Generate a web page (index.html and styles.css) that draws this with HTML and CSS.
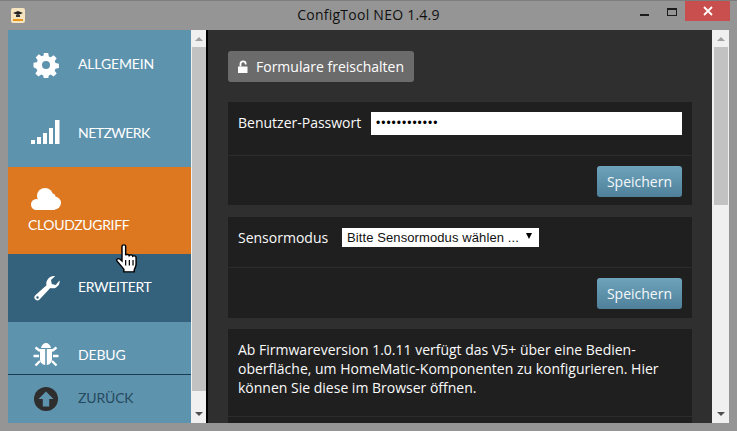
FILE: index.html
```html
<!DOCTYPE html>
<html lang="en">
<head>
    <meta charset="UTF-8">
    <title>ConfigTool NEO 1.4.9</title>
    <link rel="stylesheet" href="styles.css">
</head>
<body>
    <div class="window">
        <header class="titlebar">
            <svg class="app-icon" width="14" height="15" viewBox="0 0 14 15">
                <rect x="0" y="0" width="14" height="15" rx="2" fill="#f6e3c0"/>
                <path d="M2 5 7 3l5 2-5 2z" fill="#222"/>
                <path d="M5 7h4v2H5z" fill="#333"/>
                <rect x="2" y="11" width="10" height="2" fill="#e8961e"/>
            </svg>
            <span class="title">ConfigTool NEO 1.4.9</span>
            <div class="controls">
                <span class="ctl-min"></span>
                <span class="ctl-max"></span>
                <span class="ctl-close">
                    <svg width="10" height="10" viewBox="0 0 10 10"><path d="M1 1 9 9M9 1 1 9" stroke="#fff" stroke-width="1.8"/></svg>
                </span>
            </div>
        </header>
        <div class="client">
            <nav class="sidebar">
                <a class="item item-general">
                    <svg class="icon" width="26" height="26" viewBox="0 0 26 26">
                        <path fill="#fff" fill-rule="evenodd" d="M10.800 1h4.400l.6 3.400 2 .8 2.800-2 3.100 3.100-2 2.800.8 2 3.400.6v4.400l-3.400.6-.8 2 2 2.800-3.100 3.100-2.800-2-2 .8-.6 3.400h-4.400l-.6-3.400-2-.8-2.800 2-3.100-3.100 2-2.800-.8-2L.5 15.200v-4.400l3.400-.6.8-2-2-2.800 3.100-3.100 2.800 2 2-.8zM13 9a4 4 0 1 0 0 8 4 4 0 0 0 0-8z"/>
                    </svg>
                    <span>ALLGEMEIN</span>
                </a>
                <a class="item item-network">
                    <svg class="icon" width="30" height="26" viewBox="0 0 30 26">
                        <path fill="#fff" d="M1 21h4v4H1zM7 18h4v7H7zM13 14h4v11h-4zM19 9h4v16h-4zM25 1h4.500v24H25z"/>
                    </svg>
                    <span>NETZWERK</span>
                </a>
                <a class="item item-cloud">
                    <svg width="30" height="22" viewBox="0 0 30 22">
                        <circle cx="5.500" cy="16.500" r="5.500" fill="#fff"/>
                        <circle cx="14" cy="8" r="8" fill="#fff"/>
                        <circle cx="23.500" cy="15" r="6.500" fill="#fff"/>
                        <circle cx="21" cy="9" r="3.500" fill="#fff"/>
                        <rect x="5" y="12" width="19" height="10" fill="#fff"/>
                    </svg>
                    <span>CLOUDZUGRIFF</span>
                </a>
                <a class="item item-advanced">
                    <svg class="icon" width="28" height="28" viewBox="0 0 28 28">
                        <path fill="#fff" fill-rule="evenodd" d="M26.500 6.500c.8 4-2.500 8-7 7.800-.8 0-1.500-.2-2.200-.4L6.500 25.500c-1.300 1.300-3.400 1.200-4.500-.2-1-1.200-.9-3 .3-4.100l11.200-10c-.9-3.900 1.700-8 5.700-9 1-.2 2-.3 3-.1l-4.200 4 .8 3.800 3.900 1.100zM4.500 22.200a1.300 1.300 0 1 0 0 2.600 1.300 1.300 0 0 0 0-2.600z"/>
                    </svg>
                    <span>ERWEITERT</span>
                </a>
                <a class="item item-debug">
                    <svg class="icon" width="26" height="26" viewBox="0 0 26 26">
                        <path fill="#fff" d="M8 6c.5-3 2.700-5 5-5s4.500 2 5 5zM7 7h5.200v16C9.500 22.800 7 20.500 7 17zM13.800 7H19v10c0 3.500-2.500 5.800-5.200 6z"/>
                        <path stroke="#fff" stroke-width="2.400" fill="none" d="M7 9 2.500 5.500M19 9l4.500-3.500M6 14H.5M20 14h5.500M7 19l-4.500 4.500M19 19l4.500 4.500"/>
                    </svg>
                    <span>DEBUG</span>
                </a>
                <a class="item item-back">
                    <svg class="icon" width="24" height="24" viewBox="0 0 24 24">
                        <circle cx="12" cy="12" r="12" fill="#2e2e2e"/>
                        <path fill="#5e93ae" d="M12 4.500 19.500 12h-4.300v7.500H8.800V12H4.500z"/>
                    </svg>
                    <span>ZURÜCK</span>
                </a>
            </nav>
            <div class="scrollbar scrollbar-left">
                <span class="arrow-up"></span>
                <span class="thumb"></span>
                <span class="arrow-down"></span>
            </div>
            <main class="content">
                <button class="unlock">
                    <svg width="14" height="14" viewBox="0 0 14 14">
                        <path fill="#fff" d="M1 6.500h9.500V13H1z"/>
                        <path fill="none" stroke="#fff" stroke-width="1.800" d="M3.500 6.500V4a2.600 2.600 0 0 1 5.200 0v.5"/>
                    </svg>
                    Formulare freischalten
                </button>
                <section class="panel">
                    <div class="row">
                        <label class="field-label">Benutzer-Passwort</label>
                        <span class="password">••••••••••••</span>
                    </div>
                    <div class="row-actions"><button class="save">Speichern</button></div>
                </section>
                <section class="panel panel-sensor">
                    <div class="row row-sensor">
                        <label class="field-label">Sensormodus</label>
                        <span class="select">Bitte Sensormodus wählen ...<i></i></span>
                    </div>
                    <div class="row-actions"><button class="save">Speichern</button></div>
                </section>
                <section class="panel">
                    <p class="info">Ab Firmwareversion 1.0.11 verfügt das V5+ über eine Bedien-<br>oberfläche, um HomeMatic-Komponenten zu konfigurieren. Hier<br>können Sie diese im Browser öffnen.</p>
                    <div class="row-tail"></div>
                </section>
            </main>
            <div class="scrollbar scrollbar-right">
                <span class="arrow-up"></span>
                <span class="thumb"></span>
                <span class="arrow-down"></span>
            </div>
        </div>
        <svg class="cursor" width="27" height="30" viewBox="0 0 22 28" preserveAspectRatio="none">
            <path fill="#fff" stroke="#000" stroke-width="1.200" d="M6.500 2c0-1.600 3-1.600 3 0v8.500c.4-1 2.600-1 2.900.3.600-.9 2.600-.8 2.900.6.700-.6 2.600-.4 2.700 1.200v6.400c0 2-.8 3.500-1.500 5v2H8v-2.500L2.500 16c-1-1.500.8-3 2.200-2l1.800 1.800z"/>
            <path stroke="#000" stroke-width="1" d="M9.500 15v5M12.500 15v5M15.500 15v5"/>
        </svg>
    </div>
</body>
</html>
```

FILE: styles.css
```css
* {
    margin: 0;
    padding: 0;
    box-sizing: border-box;
}

html, body {
    width: 737px;
    height: 431px;
    overflow: hidden;
}

body {
    font-family: 'Open Sans', sans-serif;
    background-color: #959595;
}

.window {
    position: relative;
    width: 737px;
    height: 431px;
    display: flex;
    flex-direction: column;
    padding: 0 8px 8px;
    background-color: #959595;
    border-top: 1px solid #7d7d7d;
}

.titlebar {
    position: relative;
    height: 29px;
    flex: none;
    display: flex;
    align-items: center;
    justify-content: center;
    padding-bottom: 2px;
}

.app-icon {
    position: absolute;
    left: 3px;
    top: 7px;
}

.title {
    font-size: 14px;
    letter-spacing: .25px;
    color: #111;
}

.controls {
    position: absolute;
    right: -1px;
    top: 0;
    height: 20px;
    display: flex;
    align-items: flex-start;
}

.ctl-min {
    width: 9px;
    height: 2px;
    margin: 13px 18px 0 0;
    background-color: #1c1c1c;
}

.ctl-max {
    width: 10px;
    height: 8px;
    margin: 7px 0 0;
    border: 1px solid #1c1c1c;
    border-top-width: 2px;
}

.ctl-close {
    width: 45px;
    height: 20px;
    margin-left: 8px;
    background-color: #c94f4f;
    display: flex;
    align-items: center;
    justify-content: center;
}

.client {
    flex: 1;
    min-height: 0;
    display: flex;
    background-color: #000;
}

.sidebar {
    width: 183px;
    flex: none;
    display: flex;
    flex-direction: column;
    background-color: #5e93ae;
    font-family: 'Lato', sans-serif;
    font-size: 14px;
    letter-spacing: -.15px;
    color: #fff;
}

.item {
    display: flex;
    align-items: center;
    padding-left: 25px;
    overflow: hidden;
}

.icon {
    flex: none;
}

.item-general {
    height: 68px;
    gap: 19px;
    padding-bottom: 1px;
}

.item-general .icon {
    margin-top: 3px;
}

.item-network {
    height: 69px;
    gap: 18px;
    padding-left: 22px;
    padding-bottom: 1px;
    letter-spacing: -.55px;
}

.item-cloud {
    height: 87px;
    flex-direction: column;
    align-items: flex-start;
    gap: 6px;
    padding: 21px 0 0 20px;
    letter-spacing: -.35px;
    background-color: #dd7720;
}

.item-cloud svg {
    margin-left: 3px;
}

.item-advanced {
    height: 68px;
    gap: 17px;
    padding-left: 25px;
    padding-bottom: 3px;
    letter-spacing: -.3px;
    background-color: #34627d;
}

.item-advanced .icon {
    margin-top: 3px;
}

.item-debug {
    height: 52px;
    gap: 19px;
    padding-top: 13px;
}

.item-back {
    height: 49px;
    gap: 20px;
    padding-left: 26px;
    padding-bottom: 3px;
    border-top: 1px solid #1c3c50;
    color: #264a5e;
}

.item-back .icon {
    margin-top: 2px;
}

.scrollbar {
    width: 15px;
    flex: none;
    display: flex;
    flex-direction: column;
    align-items: center;
    background-color: #f0f0f0;
}

.scrollbar-left {
    margin-right: 2px;
}

.scrollbar-right {
    width: 17px;
}

.arrow-up, .arrow-down {
    width: 0;
    height: 0;
    flex: none;
    border-left: 4px solid transparent;
    border-right: 4px solid transparent;
}

.arrow-up {
    margin: 7px 0 5px;
    border-bottom: 4px solid #a0a0a0;
}

.arrow-down {
    margin: auto 0 7px;
    border-top: 4px solid #505050;
}

.thumb {
    width: 14px;
    margin-top: 1px;
    background-color: #c2c2c2;
}

.scrollbar-left .thumb {
    height: 344px;
}

.scrollbar-right .thumb {
    height: 158px;
}

.content {
    flex: 1;
    min-width: 0;
    padding: 21px 21px 0 20px;
    overflow: hidden;
    background-color: #2f2f2f;
    display: flex;
    flex-direction: column;
    align-items: flex-start;
    color: #fafafa;
    font-size: 14px;
}

.unlock {
    flex: none;
    width: 186px;
    height: 31px;
    display: flex;
    align-items: center;
    gap: 5px;
    padding: 0 0 0 9px;
    margin-bottom: 20px;
    border: 0;
    border-radius: 3px;
    background-color: #6b6b6b;
    color: #fff;
    font-family: 'Open Sans', sans-serif;
    font-size: 14px;
}

.panel {
    flex: none;
    width: 464px;
    margin-bottom: 12px;
    background-color: #1f1f1f;
}

.panel-sensor {
    margin-bottom: 11px;
}

.row {
    height: 54px;
    padding: 10px 10px 0;
    display: flex;
    align-items: flex-start;
    border-bottom: 1px solid #2d2d2d;
}

.row-sensor {
    height: 51px;
}

.field-label {
    flex: none;
    line-height: 21px;
    white-space: nowrap;
}

.row .field-label {
    width: 124px;
}

.row-sensor .field-label {
    width: 90px;
}

.password {
    width: 311px;
    height: 23px;
    margin-left: 9px;
    padding-left: 5px;
    background-color: #fff;
    color: #000;
    font-family: 'Liberation Sans', sans-serif;
    font-size: 12px;
    line-height: 23px;
    letter-spacing: 1px;
}

.select {
    position: relative;
    width: 197px;
    height: 19px;
    margin: 1px 0 0 14px;
    padding-left: 5px;
    background-color: #fff;
    color: #111;
    font-family: 'Liberation Sans', sans-serif;
    font-size: 13px;
    line-height: 19px;
    letter-spacing: .1px;
}

.select i {
    position: absolute;
    right: 7px;
    top: 5px;
    width: 0;
    height: 0;
    border-left: 3px solid transparent;
    border-right: 3px solid transparent;
    border-top: 6px solid #000;
}

.row-actions {
    height: 49px;
    padding: 10px 10px 0;
    display: flex;
    justify-content: flex-end;
    align-items: flex-start;
}

.panel-sensor .row-actions {
    height: 50px;
}

.save {
    width: 85px;
    height: 31px;
    border: 0;
    border-radius: 3px;
    background: linear-gradient(#6ea3bc, #4f8099);
    color: #f4f8fa;
    font-family: 'Open Sans', sans-serif;
    font-size: 14px;
}

.info {
    padding: 11px 10px 0;
    height: 88px;
    line-height: 19px;
    border-bottom: 1px solid #2d2d2d;
}

.row-tail {
    height: 20px;
}

.cursor {
    position: absolute;
    left: 114px;
    top: 243px;
}
```
